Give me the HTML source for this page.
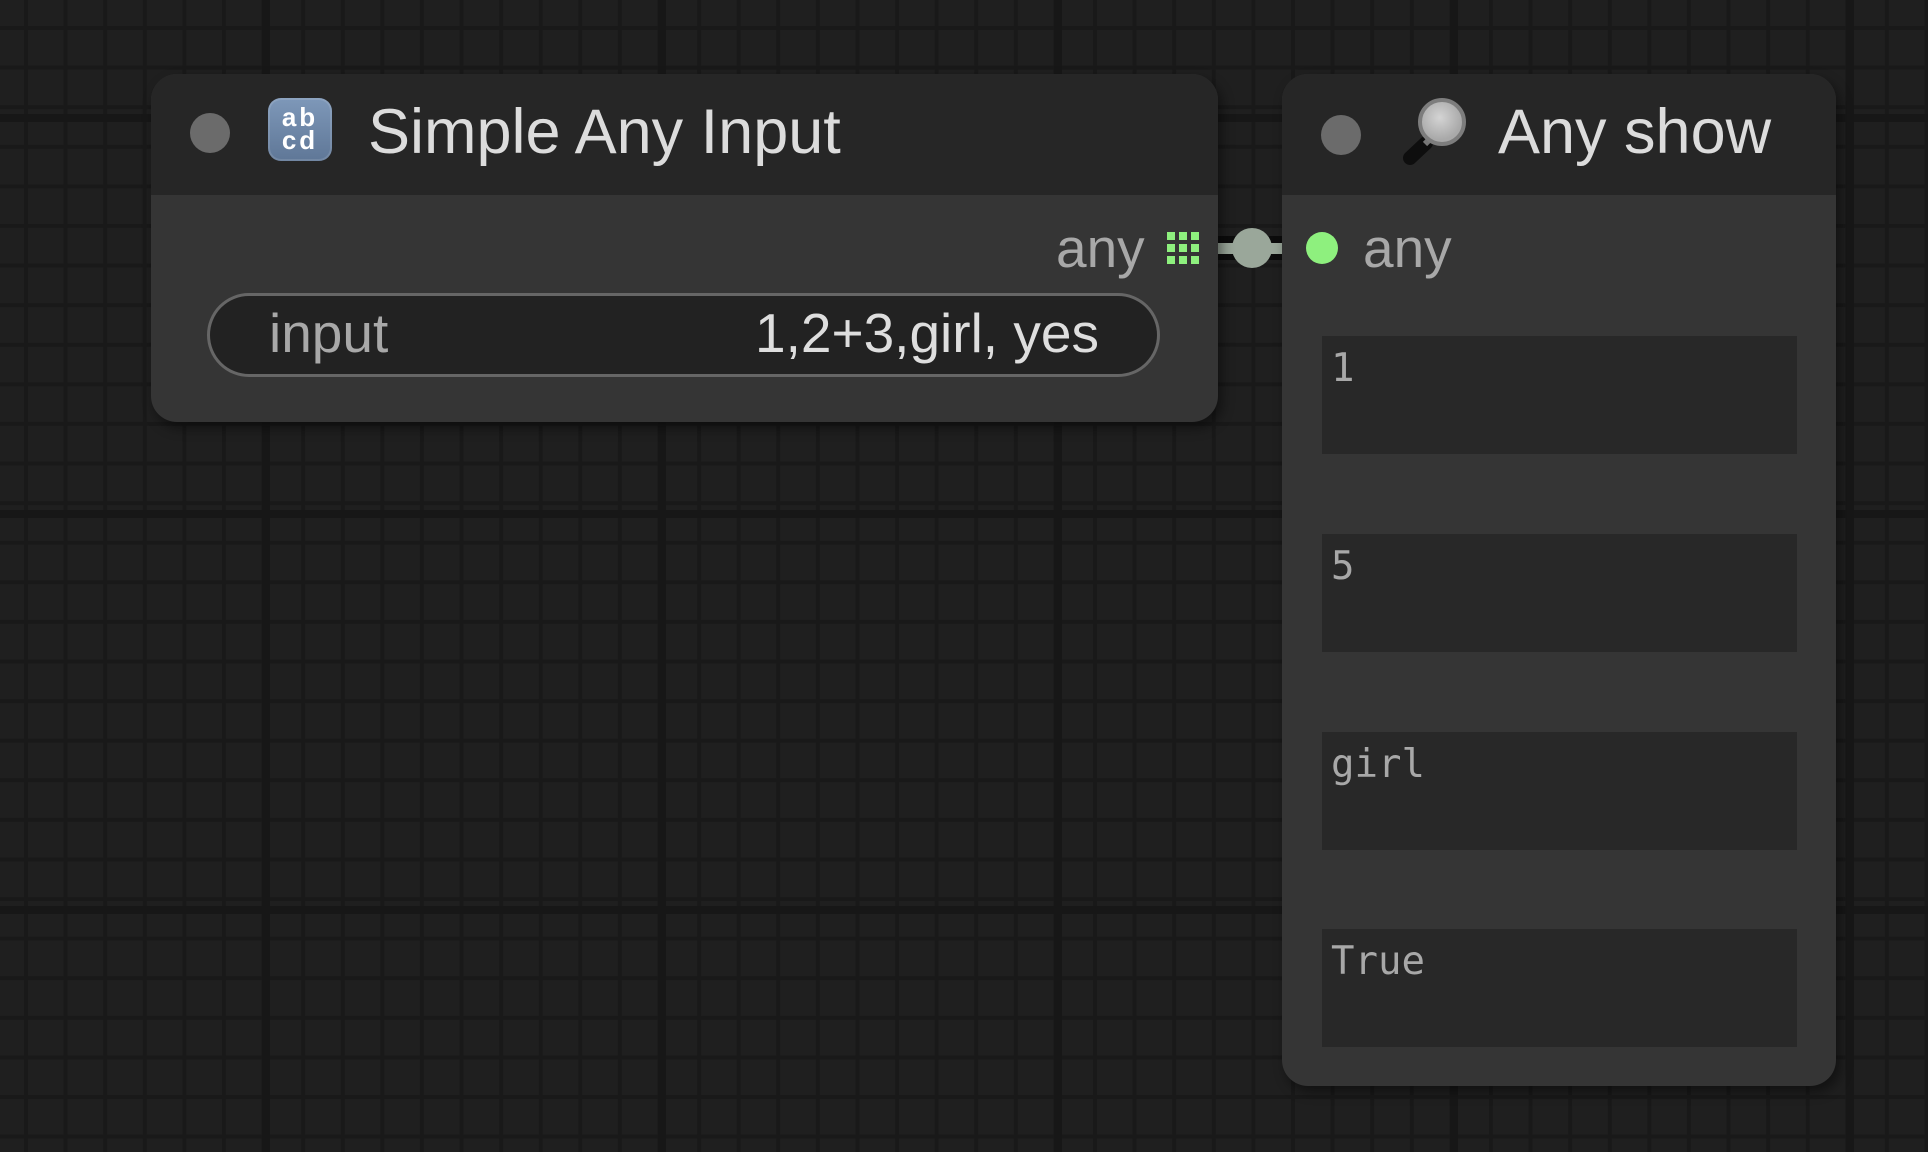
<!DOCTYPE html>
<html><head><meta charset="utf-8"><style>
*{margin:0;padding:0;box-sizing:border-box}
html,body{width:1928px;height:1152px;overflow:hidden}
body{position:relative;background-color:#1f1f1f;
background-image:
linear-gradient(90deg,#171717 8px,transparent 8px),
linear-gradient(0deg,transparent calc(100% - 8px),#171717 calc(100% - 8px)),
linear-gradient(90deg,#191919 4px,transparent 4px),
linear-gradient(180deg,#191919 4px,transparent 4px);
background-size:396px 396px,396px 396px,39.6px 39.6px,39.6px 39.6px;
background-position:262px 0,0 114px,24px 0,0 26px;
font-family:"Liberation Sans",sans-serif}
.a{position:absolute}
.node{position:absolute;background:#353535;border-radius:26px;overflow:hidden;box-shadow:4px 6px 12px rgba(0,0,0,.45)}
.hdr{position:absolute;left:0;top:0;right:0;height:121px;background:#262626}
.dot{position:absolute;width:40px;height:40px;border-radius:50%;background:#6b6b6b}
.title{position:absolute;font-size:63px;color:#dcdcdc;line-height:1;white-space:nowrap}
.lbl{position:absolute;font-size:55px;color:#a8a8a8;line-height:1;white-space:nowrap}
.box{position:absolute;left:1322px;width:475px;height:118px;background:#282828}
.box span{position:absolute;left:9px;top:13px;font-family:"DejaVu Sans Mono","Liberation Mono",monospace;font-size:39px;color:#a8a8a8;line-height:1}
</style></head><body>
<div class="a" style="left:1216px;top:236px;width:68px;height:24px;background:#0c0c0c"></div>
<div class="a" style="left:1216px;top:243px;width:68px;height:11px;background:#9aa79a"></div>
<div class="a" style="left:1232px;top:228px;width:40px;height:40px;border-radius:50%;background:#9aa79a"></div>

<div class="node" style="left:151px;top:74px;width:1067px;height:348px">
 <div class="hdr"></div>
 <div class="dot" style="left:39px;top:39px"></div>
 <div class="a" style="left:117px;top:24px;width:64px;height:63px;border-radius:13px;background:linear-gradient(#7e98b9,#5f7797);box-shadow:inset 0 0 0 2px rgba(255,255,255,.12)">
  <div class="a" style="left:0;width:64px;top:8px;text-align:center;color:#fff;font-weight:bold;font-size:26px;line-height:23px;letter-spacing:3px">ab<br>cd</div>
 </div>
 <div class="title" style="left:217px;top:27px">Simple Any Input</div>
 <div class="lbl" style="left:905px;top:147px">any</div>
 <svg class="a" style="left:1016px;top:158px" width="34" height="32">
  <g fill="#8ef07e">
  <rect x="0" y="0" width="8" height="8"/><rect x="12" y="0" width="8" height="8"/><rect x="24" y="0" width="8" height="8"/>
  <rect x="0" y="12" width="8" height="8"/><rect x="12" y="12" width="8" height="8"/><rect x="24" y="12" width="8" height="8"/>
  <rect x="0" y="24" width="8" height="8"/><rect x="12" y="24" width="8" height="8"/><rect x="24" y="24" width="8" height="8"/>
  </g></svg>
 <div class="a" style="left:56px;top:219px;width:953px;height:84px;border-radius:42px;background:#222;border:3px solid #666"></div>
 <div class="lbl" style="left:118px;top:232px">input</div>
 <div class="lbl" style="left:604px;top:232px;color:#dedede">1,2+3,girl, yes</div>
</div>

<div class="node" style="left:1282px;top:74px;width:554px;height:1012px">
 <div class="hdr"></div>
 <div class="dot" style="left:39px;top:41px"></div>
 <svg class="a" style="left:115px;top:22px" width="75" height="75" viewBox="0 0 75 75">
  <defs><radialGradient id="g" cx="45%" cy="40%"><stop offset="0" stop-color="#d4d4d4"/><stop offset="1" stop-color="#a9a9a9"/></radialGradient></defs>
  <line x1="13" y1="62" x2="29" y2="47" stroke="#0e0e0e" stroke-width="14" stroke-linecap="round"/>
  <line x1="28" y1="48" x2="36" y2="40" stroke="#777" stroke-width="6"/>
  <circle cx="45" cy="26" r="22" fill="url(#g)" stroke="#7d7d7d" stroke-width="4"/>
 </svg>
 <div class="title" style="left:216px;top:27px">Any show</div>
 <div class="a" style="left:24px;top:158px;width:32px;height:32px;border-radius:50%;background:#8ef07e"></div>
 <div class="lbl" style="left:81px;top:147px">any</div>
</div>
<div class="box" style="top:336px"><span>1</span></div>
<div class="box" style="top:534px"><span>5</span></div>
<div class="box" style="top:732px"><span>girl</span></div>
<div class="box" style="top:929px"><span>True</span></div>
</body></html>
